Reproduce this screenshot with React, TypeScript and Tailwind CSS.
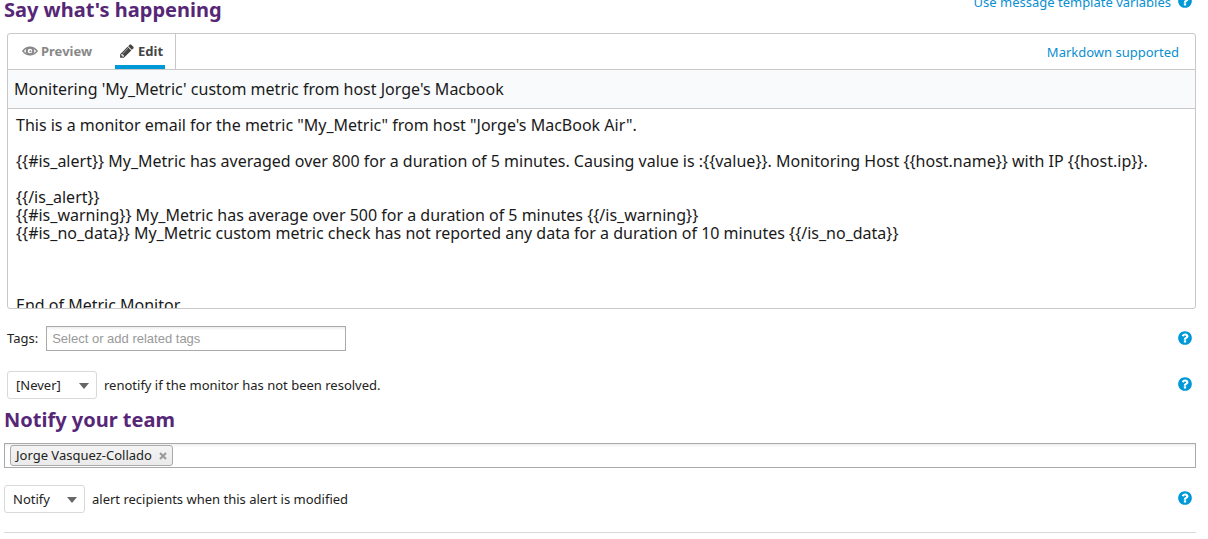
import { useState } from "react";
import type { ReactNode } from "react";

const MESSAGE = `This is a monitor email for the metric "My_Metric" from host "Jorge's MacBook Air".

{{#is_alert}} My_Metric has averaged over 800 for a duration of 5 minutes. Causing value is :{{value}}. Monitoring Host {{host.name}} with IP {{host.ip}}.

{{/is_alert}}
{{#is_warning}} My_Metric has average over 500 for a duration of 5 minutes {{/is_warning}}
{{#is_no_data}} My_Metric custom metric check has not reported any data for a duration of 10 minutes {{/is_no_data}}



End of Metric Monitor`;

const PENCIL =
  "M491 1536l91-91-235-235-91 91v107h128v128h107zm523-928q0-22-22-22-10 0-17 7l-542 542q-7 7-7 17 0 22 22 22 10 0 17-7l542-542q7-7 7-17zm-54-192l416 416-832 832h-416v-416zm683 96q0 53-37 90l-166 166-416-416 166-165q36-38 90-38 53 0 91 38l235 234q37 39 37 91z";
const QUESTION =
  "M1024 1376v-192q0-14-9-23t-23-9h-192q-14 0-23 9t-9 23v192q0 14 9 23t23 9h192q14 0 23-9t9-23zm256-672q0-88-55.5-163t-138.5-116-170-41q-243 0-371 213-15 24 8 42l132 100q7 6 19 6 16 0 25-12 53-68 86-92 34-24 86-24 48 0 85.5 26t37.5 59q0 38-20 61t-68 45q-63 28-115.5 86.5t-52.5 125.5v36q0 14 9 23t23 9h192q14 0 23-9t9-23q0-19 21.5-49.5t54.5-49.5q32-18 49-28.5t46-35 44.5-48 28-60.5 12.5-81zm384 192q0 209-103 385.5t-279.5 279.5-385.5 103-385.5-103-279.5-279.5-103-385.5 103-385.5 279.5-279.5 385.5-103 385.5 103 279.5 279.5 103 385.5z";

function Icon({ d, className }: { d: string; className: string }) {
  return (
    <svg viewBox="0 0 1792 1792" fill="currentColor" aria-hidden="true" className={className}>
      <path d={d} />
    </svg>
  );
}

function EyeIcon() {
  return (
    <svg viewBox="0 0 16 10" fill="none" stroke="currentColor" aria-hidden="true" className="mb-px h-[10px] w-4">
      <path d="M.9 5C2.900 2.200 5.200 1.200 8 1.200S13.100 2.200 15.100 5C13.100 7.800 10.800 8.800 8 8.800S2.900 7.800.9 5z" strokeWidth="1.400" />
      <circle cx="8" cy="5" r="3.300" strokeWidth="2" />
      <circle cx="8.400" cy="5.200" r="1" fill="currentColor" stroke="none" />
    </svg>
  );
}

function HelpButton() {
  return (
    <button type="button" aria-label="Help" className="mb-[2px] shrink-0 text-[#0099d8]">
      <Icon d={QUESTION} className="block size-4" />
    </button>
  );
}

function Dropdown({ id, options, className }: { id: string; options: string[]; className: string }) {
  return (
    <span className="relative inline-flex">
      <select
        id={id}
        className={`h-7 appearance-none rounded-[3px] border border-[#d9d9d9] bg-white pl-2 text-[13px] text-[#222] ${className}`}
      >
        {options.map((o) => (
          <option key={o}>{o}</option>
        ))}
      </select>
      <svg
        viewBox="0 0 10 6"
        aria-hidden="true"
        className="pointer-events-none absolute top-3 right-2 h-[6px] w-[10px] fill-[#666]"
      >
        <path d="M0 0h10L5 6z" />
      </svg>
    </span>
  );
}

function Row({ children }: { children: ReactNode }) {
  return <div className="flex items-center justify-between pr-[3px]">{children}</div>;
}

export default function App() {
  const [title, setTitle] = useState("Monitering 'My_Metric' custom metric from host Jorge's Macbook");
  const [message, setMessage] = useState(MESSAGE);
  return (
    <main className="overflow-hidden bg-white pr-3 pl-1 font-['Noto_Sans',sans-serif] text-[13px] leading-[18px] text-[#222]">
      <section>
        <header className="-mt-[7px] flex items-start justify-between pr-[3px]">
          <h2 className="pt-[3px] text-xl leading-7 font-bold text-[#572777]">Say what's happening</h2>
          <div className="flex items-center gap-[6px]">
            <a href="#variables" className="text-[#0a8fd0]">
              Use message template variables
            </a>
            <HelpButton />
          </div>
        </header>

        <div className="mt-[9px] ml-[3px] overflow-hidden rounded-[3px] border border-[#c8c8c8]">
          <div className="flex h-9 items-stretch justify-between border-b border-[#c8c8c8]">
            <div className="flex gap-[18px] border-r border-[#c8c8c8] pr-[10px] pl-[9px] font-bold">
              <button type="button" className="flex items-center gap-[3px] px-[5px] pb-px text-[#888]">
                <EyeIcon />
                Preview
              </button>
              <button
                type="button"
                className="flex items-center gap-[3px] border-b-4 border-[#0099d8] pt-[3px] pr-[2px] pl-1 text-[#444]"
              >
                <Icon d={PENCIL} className="mb-px size-4" />
                Edit
              </button>
            </div>
            <a href="#markdown" className="self-center pr-4 text-[#0a8fd0]">
              Markdown supported
            </a>
          </div>
          <input
            aria-label="Title"
            value={title}
            onChange={(e) => setTitle(e.target.value)}
            className="block h-[39px] w-full border-b border-[#c8c8c8] bg-[#f9fafc] px-[6px] text-base text-[#1a1a1a] outline-none"
          />
          <textarea
            aria-label="Message"
            value={message}
            onChange={(e) => setMessage(e.target.value)}
            className="block h-[199px] w-full resize-none overflow-hidden px-2 pt-[7px] text-base leading-[18px] text-[#1a1a1a] outline-none"
          />
        </div>

        <div className="mt-[17px] ml-[3px]">
          <Row>
            <div className="flex items-center gap-2">
              <label htmlFor="tags" className="pb-[2px]">
                Tags:
              </label>
              <input
                id="tags"
                placeholder="Select or add related tags"
                className="h-[25px] w-[300px] border border-[#aaa] bg-linear-to-b from-[#eee] to-white to-15% px-[5px] font-['Liberation_Sans',sans-serif] text-[13px] outline-none placeholder:text-[#999]"
              />
            </div>
            <HelpButton />
          </Row>
        </div>

        <div className="mt-5 ml-[3px]">
          <Row>
            <div className="flex items-center gap-[7px]">
              <Dropdown id="renotify" options={["[Never]", "10 minutes", "1 hour"]} className="w-[90px]" />
              <label htmlFor="renotify">renotify if the monitor has not been resolved.</label>
            </div>
            <HelpButton />
          </Row>
        </div>
      </section>

      <section className="mt-[7px]">
        <h2 className="text-xl leading-7 font-bold text-[#572777]">Notify your team</h2>
        <div className="mt-[9px] flex h-[25px] items-center border border-[#aaa] bg-linear-to-b from-[#eee] to-white to-15% pl-[5px]">
          <span className="flex h-[21px] shrink-0 items-center gap-[6px] rounded-[3px] border border-[#aaa] bg-linear-to-b from-[#f4f4f4] to-[#eaeaea] pr-1 pb-px pl-[5px]">
            Jorge Vasquez-Collado
            <button type="button" aria-label="Remove Jorge Vasquez-Collado" className="px-px text-[#999]">
              <svg viewBox="0 0 8 8" aria-hidden="true" className="mt-[2px] size-2 stroke-current stroke-2">
                <path d="M1 1l6 6M7 1L1 7" />
              </svg>
            </button>
          </span>
          <input aria-label="Add recipient" className="min-w-0 flex-1 bg-transparent px-1 outline-none" />
        </div>
        <div className="mt-[17px] border-b border-[#d9d9d9] pb-[19px]">
          <Row>
            <div className="flex items-center gap-[7px]">
              <Dropdown id="notify" options={["Notify", "Do not notify"]} className="w-[81px]" />
              <label htmlFor="notify">alert recipients when this alert is modified</label>
            </div>
            <HelpButton />
          </Row>
        </div>
      </section>
    </main>
  );
}
